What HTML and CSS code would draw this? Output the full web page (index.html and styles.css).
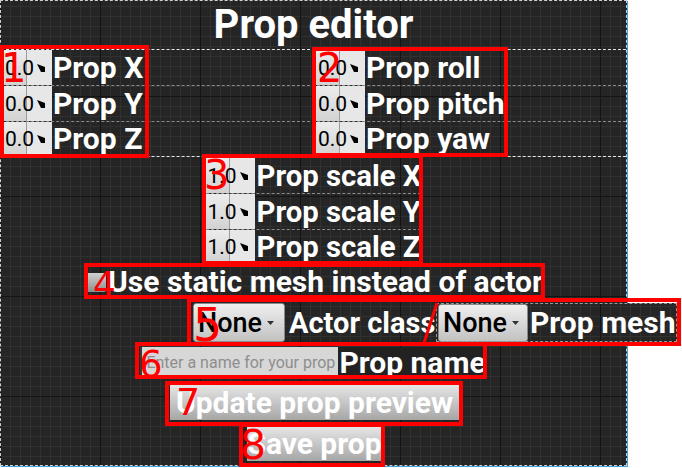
FILE: index.html
```html
<!DOCTYPE html>
<html>
<head>
<meta charset="utf-8">
<title>Prop editor</title>
<link rel="stylesheet" href="styles.css">
</head>
<body>
<div class="canvas grid">
  <div class="title">Prop editor</div>

  <div class="pairs">
    <div class="pair-row">
      <div class="cell"><span class="spin"><span>0.0</span><svg class="spin-arrow" viewBox="0 0 8 8" width="8" height="8"><polygon points="0,0 8,3 8,8 4,8" fill="#000"/></svg></span><span class="lbl">Prop X</span></div>
      <div class="cell"><span class="spin"><span>0.0</span><svg class="spin-arrow" viewBox="0 0 8 8" width="8" height="8"><polygon points="0,0 8,3 8,8 4,8" fill="#000"/></svg></span><span class="lbl">Prop roll</span></div>
    </div>
    <div class="pair-row">
      <div class="cell"><span class="spin"><span>0.0</span><svg class="spin-arrow" viewBox="0 0 8 8" width="8" height="8"><polygon points="0,0 8,3 8,8 4,8" fill="#000"/></svg></span><span class="lbl">Prop Y</span></div>
      <div class="cell"><span class="spin"><span>0.0</span><svg class="spin-arrow" viewBox="0 0 8 8" width="8" height="8"><polygon points="0,0 8,3 8,8 4,8" fill="#000"/></svg></span><span class="lbl">Prop pitch</span></div>
    </div>
    <div class="pair-row last">
      <div class="cell"><span class="spin"><span>0.0</span><svg class="spin-arrow" viewBox="0 0 8 8" width="8" height="8"><polygon points="0,0 8,3 8,8 4,8" fill="#000"/></svg></span><span class="lbl">Prop Z</span></div>
      <div class="cell"><span class="spin"><span>0.0</span><svg class="spin-arrow" viewBox="0 0 8 8" width="8" height="8"><polygon points="0,0 8,3 8,8 4,8" fill="#000"/></svg></span><span class="lbl">Prop yaw</span></div>
    </div>
  </div>

  <div class="scale-wrap">
    <div class="scale">
      <div class="scale-row"><span class="spin"><span>1.0</span><svg class="spin-arrow" viewBox="0 0 8 8" width="8" height="8"><polygon points="0,0 8,3 8,8 4,8" fill="#000"/></svg></span><span class="lbl">Prop scale X</span></div>
      <div class="scale-row"><span class="spin"><span>1.0</span><svg class="spin-arrow" viewBox="0 0 8 8" width="8" height="8"><polygon points="0,0 8,3 8,8 4,8" fill="#000"/></svg></span><span class="lbl">Prop scale Y</span></div>
      <div class="scale-row last"><span class="spin"><span>1.0</span><svg class="spin-arrow" viewBox="0 0 8 8" width="8" height="8"><polygon points="0,0 8,3 8,8 4,8" fill="#000"/></svg></span><span class="lbl">Prop scale Z</span></div>
    </div>
  </div>

  <div class="check-row"><span class="checkbox"></span><span class="lbl">Use static mesh instead of actor</span></div>

  <div class="combo-row">
    <span class="combo">None<svg class="caret" viewBox="0 0 7 4" width="7" height="4"><polygon points="0,0 7,0 3.5,4" fill="#333"/></svg></span>
    <span class="lbl actor">Actor class</span>
    <span class="mesh-item grid">
      <span class="combo combo2">None<svg class="caret" viewBox="0 0 7 4" width="7" height="4"><polygon points="0,0 7,0 3.5,4" fill="#333"/></svg></span>
      <span class="lbl mesh-lbl">Prop mesh</span>
    </span>
  </div>

  <div class="name-row"><span class="input">Enter a name for your prop</span><span class="lbl name-lbl">Prop name</span></div>

  <div class="btn-row first"><span class="btn wide">Update prop preview</span></div>
  <div class="btn-row"><span class="btn save">Save prop</span></div>

  <div class="annotations">
    <div class="box b1"></div>
    <div class="box b2"></div>
    <div class="box b3"></div>
    <div class="box b4"></div>
    <div class="box b5"></div>
    <div class="box b6"></div>
    <div class="box b7"></div>
    <div class="box b8"></div>
    <span class="num n1">1</span>
    <span class="num n2">2</span>
    <span class="num n3">3</span>
    <span class="num n4">4</span>
    <span class="num n5">5</span>
    <span class="num n6">6</span>
    <span class="num n7">7</span>
    <span class="num n8">8</span>
    <svg class="slash" width="682" height="468" viewBox="0 0 682 468"><line x1="423" y1="346" x2="437" y2="303" stroke="#ff0000" stroke-width="3"/></svg>
  </div>
</div>
</body>
</html>
```

FILE: styles.css
```css
html, body {
  margin: 0;
  padding: 0;
  background: #ffffff;
}
body {
  width: 682px;
  height: 468px;
  overflow: hidden;
  font-family: Roboto, "Liberation Sans", sans-serif;
}

.grid {
  background-color: #252525;
  background-image:
    linear-gradient(to right, #141414 1px, transparent 1px),
    linear-gradient(to bottom, #141414 1px, transparent 1px),
    linear-gradient(to right, #313131 1px, transparent 1px),
    linear-gradient(to bottom, #313131 1px, transparent 1px);
  background-size: 100px 100px, 100px 100px, 10px 10px, 10px 10px;
  background-position: 0 0, 0 96px, 0 0, 0 6px;
  background-attachment: fixed;
}

.canvas {
  position: relative;
  box-sizing: border-box;
  width: 627px;
  height: 466px;
  border: 1px dashed #d0d0d0;
  box-shadow: 1px 1px 0 #3aa6dd;
  display: flex;
  flex-direction: column;
}

.title {
  height: 48px;
  line-height: 48px;
  border-bottom: 1px dashed #e8e8e8;
  text-align: center;
  color: #fff;
  font-size: 40px;
  font-weight: 700;
}

.lbl {
  color: #fff;
  font-size: 30px;
  font-weight: 700;
  line-height: 34px;
  white-space: nowrap;
}

/* spin boxes */
.spin {
  box-sizing: border-box;
  width: 49px;
  flex: none;
  display: flex;
  align-items: center;
  padding-left: 2px;
  font-size: 21px;
  color: #000;
  background:
    linear-gradient(to right, transparent 0 23px, #9c9c9c 23px 24px, #e7e7e7 24px),
    linear-gradient(to bottom, #ececec, #d2d2d2);
  white-space: nowrap;
}
.spin-arrow {
  margin-left: 3px;
  flex: none;
}

.pairs {
  display: flex;
  flex-direction: column;
}
.pair-row {
  box-sizing: border-box;
  display: grid;
  grid-template-columns: 313px 1fr;
  padding-left: 2px;
  border-bottom: 1px dashed #8c8c8c;
  height: 36px;
}
.pair-row.last {
  height: 35px;
  border-bottom-color: #e8e8e8;
}
.cell {
  display: flex;
  align-items: stretch;
}
.cell .lbl, .scale-row .lbl {
  align-self: center;
  margin-left: 1px;
}

.scale-wrap {
  display: flex;
  justify-content: center;
  padding-top: 1px;
}
.scale {
  display: flex;
  flex-direction: column;
}
.scale-row {
  box-sizing: border-box;
  height: 36px;
  display: flex;
  align-items: stretch;
  border-bottom: 1px dashed #8c8c8c;
}
.scale-row .lbl {
  margin-left: 2px;
  font-size: 29.3px;
}
.scale-row.last {
  height: 33px;
  border-bottom: none;
}

.check-row {
  margin-top: 2px;
  height: 34px;
  display: flex;
  justify-content: center;
  align-items: center;
}
.checkbox {
  width: 22px;
  height: 19px;
  border-radius: 2px;
  background: linear-gradient(to bottom, #d2d2d2, #8c8c8c);
  margin-right: 2px;
}

.combo-row {
  margin-top: 4px;
  height: 39px;
  display: flex;
  align-items: stretch;
  padding-left: 192px;
}
.combo {
  box-sizing: border-box;
  width: 92px;
  flex: none;
  display: flex;
  align-items: center;
  padding-left: 4px;
  border: 1px solid #8a8a8a;
  border-radius: 3px;
  background: linear-gradient(to bottom, #efefef, #c2c2c2);
  color: #000;
  font-size: 27px;
  font-weight: 500;
}
.caret {
  margin-left: 5px;
  flex: none;
}
.actor {
  align-self: center;
  flex: 0 0 147px;
  min-width: 0;
  margin-left: 4px;
  font-size: 29px;
}
.mesh-item {
  flex: none;
  width: 241px;
  box-sizing: border-box;
  display: flex;
  align-items: stretch;
  outline: 1px dashed #9a9a9a;
  outline-offset: -1px;
  padding: 1px 0 0 2px;
}
.combo2 {
  width: 90px;
}
.mesh-lbl {
  align-self: center;
  margin-left: 2px;
}

.name-row {
  margin-top: 5px;
  height: 31px;
  display: flex;
  justify-content: center;
  align-items: stretch;
}
.input {
  box-sizing: border-box;
  width: 198px;
  display: flex;
  align-items: center;
  padding-left: 4px;
  background: #d7d7d7;
  border-left: 2px solid #3a3a3a;
  color: #8e8e8e;
  font-size: 16px;
  white-space: nowrap;
}
.name-lbl {
  background: #222222;
  line-height: 31px;
  padding: 0 1px;
}

.btn-row {
  margin-top: 7px;
  display: flex;
  justify-content: center;
  padding-left: 2px;
}
.btn {
  height: 35px;
  line-height: 35px;
  text-align: center;
  color: #fff;
  font-size: 30px;
  font-weight: 700;
  white-space: nowrap;
  background: linear-gradient(to bottom, #e6e6e6, #a6a6a6);
}
.btn.wide { width: 290px; }
.btn.save { width: 135px; height: 34px; line-height: 34px; }

/* annotation overlay (red markup drawn over the screenshot) */
.annotations {
  position: absolute;
  left: -1px;
  top: -1px;
  width: 682px;
  height: 468px;
  pointer-events: none;
}
.box {
  position: absolute;
  box-sizing: border-box;
  border: 4px solid #ff0000;
}
.b1 { left: 0; top: 45px; width: 149px; height: 113px; }
.b2 { left: 312px; top: 47px; width: 196px; height: 110px; }
.b3 { left: 202px; top: 154px; width: 221px; height: 111px; }
.b4 { left: 84px; top: 263px; width: 461px; height: 36px; }
.b5 { left: 187px; top: 298px; width: 494px; height: 48px; }
.b6 { left: 135px; top: 342px; width: 352px; height: 37px; }
.b7 { left: 165px; top: 381px; width: 298px; height: 45px; }
.b8 { left: 239px; top: 423px; width: 146px; height: 44px; }

.num {
  position: absolute;
  font-family: "DejaVu Sans", sans-serif;
  color: #ff0000;
  line-height: 1;
}
.n1 { left: 1px; top: 48px; font-size: 40px; }
.n2 { left: 317px; top: 48px; font-size: 40px; }
.n3 { left: 204px; top: 155px; font-size: 40px; }
.n4 { left: 93px; top: 267px; font-size: 36px; }
.n5 { left: 193px; top: 302px; font-size: 46px; }
.n6 { left: 139px; top: 346px; font-size: 37px; }
.n7 { left: 176px; top: 383px; font-size: 38px; }
.n8 { left: 240px; top: 425px; font-size: 41px; }

.slash {
  position: absolute;
  left: 0;
  top: 0;
}
```
